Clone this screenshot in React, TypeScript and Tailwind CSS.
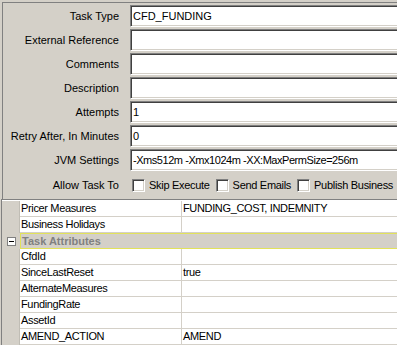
import React from "react";

const font = { fontFamily: "Tahoma, 'Liberation Sans', Arial, sans-serif" };

function Field({ label, value, tight }: { label: string; value?: string; tight?: boolean }) {
  return (
    <div className="flex items-center h-[24px]">
      <div className="w-[116px] shrink-0 text-right whitespace-nowrap">{label}</div>
      <div
        className={`ml-[11px] w-[275px] shrink-0 h-[22px] bg-white border-t border-l border-[#808080] border-b border-r border-b-white border-r-white shadow-[inset_1px_1px_0_#404040,inset_-1px_-1px_0_#d4d0c8] flex items-center pl-[2px] whitespace-nowrap ${
          tight ? "tracking-[-0.45px]" : ""
        }`}
      >
        {value}
      </div>
    </div>
  );
}

function Check({ label }: { label: string }) {
  return (
    <div className="flex items-center gap-[4px] shrink-0 whitespace-nowrap mr-[6px]">
      <div className="w-[13px] h-[13px] bg-white border-t border-l border-[#808080] border-b border-r border-b-white border-r-white shadow-[inset_1px_1px_0_#404040,inset_-1px_-1px_0_#d4d0c8]" />
      <span className="tracking-[-0.3px]">{label}</span>
    </div>
  );
}

function Row({ name, value }: { name: string; value?: string }) {
  return (
    <div className="flex h-[16px] tracking-[-0.35px]">
      <div className="w-[18px] shrink-0 bg-[#d4d0c8] border-r border-[#c0bdb5]" />
      <div className="w-[162px] shrink-0 bg-white border-b border-r border-[#d4d0c8] pl-[1px] leading-[15px] whitespace-nowrap">
        {name}
      </div>
      <div className="flex-1 bg-white border-b border-[#d4d0c8] pl-[1px] leading-[15px] whitespace-nowrap">
        {value}
      </div>
    </div>
  );
}

export default function App() {
  return (
    <div
      className="w-[397px] h-[345px] overflow-hidden bg-[#d4d0c8] text-[11px] text-black"
      style={font}
    >
      {/* form panel */}
      <div className="h-[199px] pl-[2px] pt-[2px]">
        <div className="h-full border-t border-l border-[#808080] pt-[1px]">
          <Field label="Task Type" value="CFD_FUNDING" />
          <Field label="External Reference" />
          <Field label="Comments" />
          <Field label="Description" />
          <Field label="Attempts" value="1" />
          <Field label="Retry After, In Minutes" value="0" />
          <Field label="JVM Settings" value="-Xms512m -Xmx1024m -XX:MaxPermSize=256m" tight />
          <div className="flex items-center h-[26px]">
            <div className="w-[116px] shrink-0 text-right whitespace-nowrap">Allow Task To</div>
            <div className="ml-[13px] flex items-center">
              <Check label="Skip Execute" />
              <Check label="Send Emails" />
              <Check label="Publish Business" />
            </div>
          </div>
        </div>
      </div>

      {/* property grid */}
      <div className="border-t border-[#808080] border-l ml-[1px]">
        <div className="border-t border-white" />
        <Row name="Pricer Measures" value="FUNDING_COST, INDEMNITY" />
        <Row name="Business Holidays" />
        <div className="flex h-[16px]">
          <div className="w-[18px] shrink-0 bg-[#d4d0c8] flex items-center justify-center">
            <div className="w-[9px] h-[9px] bg-white border border-[#808080] flex items-center justify-center">
              <div className="w-[5px] h-px bg-black" />
            </div>
          </div>
          <div className="flex-1 bg-[#d4d0c8] border-y border-l border-[#e2e25a] pl-[1px] leading-[14px] font-bold text-[#808080] whitespace-nowrap">
            Task Attributes
          </div>
        </div>
        <Row name="CfdId" />
        <Row name="SinceLastReset" value="true" />
        <Row name="AlternateMeasures" />
        <Row name="FundingRate" />
        <Row name="AssetId" />
        <Row name="AMEND_ACTION" value="AMEND" />
      </div>
    </div>
  );
}
